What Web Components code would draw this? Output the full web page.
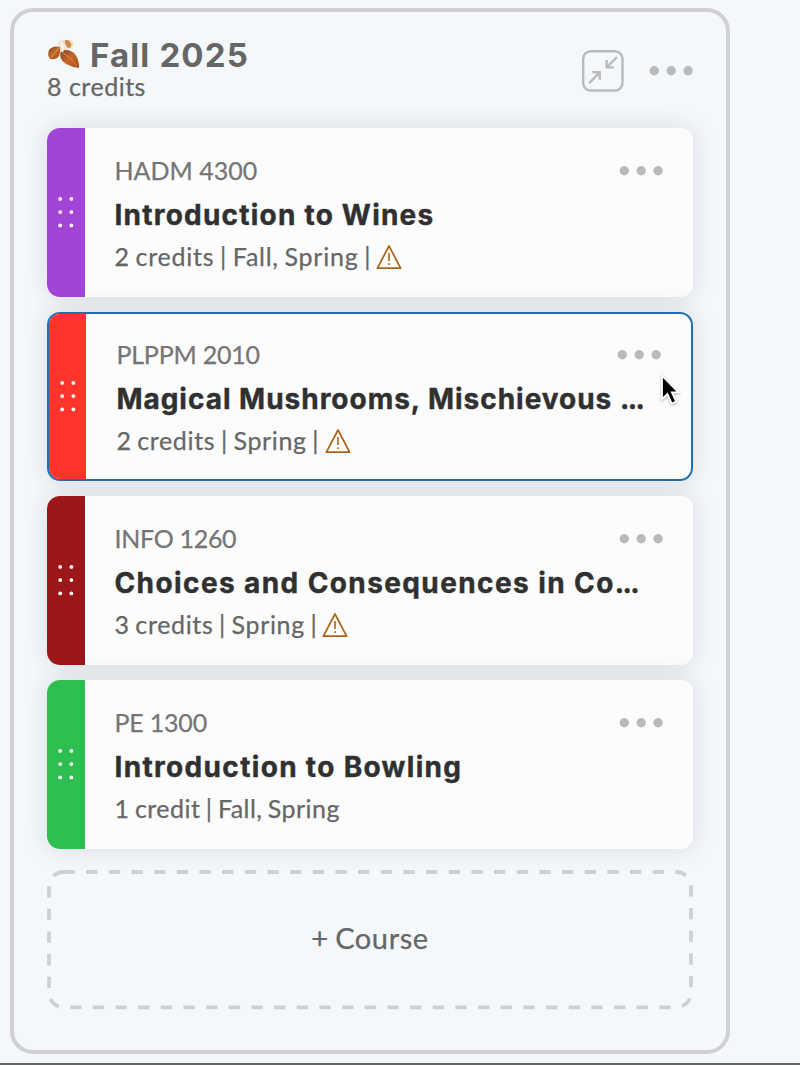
<!DOCTYPE html>
<html lang="en"><head><meta charset="utf-8"><title>Semester planner</title>
<style>
html,body{margin:0;height:100%;overflow:hidden;background:#f4f8fb}
body{font-family:Lato,"Open Sans",sans-serif;font-variant-ligatures:none}
</style></head><body>
<planner-page></planner-page>
<script>
const make=(name,html)=>customElements.define(name,class extends HTMLElement{
 constructor(){super();const t=document.createElement('template');t.innerHTML=html;
 this.attachShadow({mode:'open'}).append(t.content.cloneNode(true));}
});
make('more-dots',`<style>:host{display:block;width:44px;height:10px}svg{display:block}</style>
<svg width="44" height="10" fill="#bababa"><circle cx="5.3" cy="4.7" r="4.7"/><circle cx="22.2" cy="4.7" r="4.7"/><circle cx="39.1" cy="4.7" r="4.7"/></svg>`);
make('warning-icon',`<style>:host{display:inline-block;width:26px;height:26px;vertical-align:top}svg{display:block}</style>
<svg width="26" height="26" fill="none" stroke="#ab6216" stroke-width="1.7" stroke-linejoin="round"><path d="M13 2 24.6 24.2H1.4Z"/><path d="M13 9v8M13 19.2v1.8" stroke-width="1.6"/></svg>`);
make('drag-handle',`<style>:host{display:flex;align-items:center;justify-content:center;width:37.5px;flex:none;background:var(--card-color)}</style>
<svg width="16" height="32" fill="#fff"><circle cx="2.2" cy="2.9" r="1.9"/><circle cx="13.4" cy="2.9" r="1.9"/><circle cx="2.2" cy="16.1" r="1.9"/><circle cx="13.4" cy="16.1" r="1.9"/><circle cx="2.2" cy="29.4" r="1.9"/><circle cx="13.4" cy="29.4" r="1.9"/></svg>`);
make('course-card',`<style>
:host{display:block;height:169px;border-radius:13px;box-shadow:0 0 27px rgba(25,20,45,.12)}
.card{box-sizing:border-box;height:100%;display:flex;border-radius:13px;overflow:hidden;background:#fcfcfc}
:host([selected]) .card{border:2px solid #1f6fb2}
:host([selected]) drag-handle{width:37.4px}
.body{flex:1;min-width:0;padding:0 30.5px 0 30px;margin-top:28px;white-space:nowrap}
:host([selected]) .body{margin-top:26px}
.top{display:flex;justify-content:space-between;align-items:center;height:29px;font-size:25px;color:#757575}
more-dots{margin-top:2px}
.code{letter-spacing:var(--cs,0);-webkit-text-stroke:.25px}
.title{height:36px;line-height:36px;margin-top:12px;font-family:Inter,Lato,sans-serif;font-size:28px;font-weight:700;color:#303030;letter-spacing:var(--ts,0);-webkit-text-stroke:.4px}
.details{display:flex;height:30px;line-height:30px;margin-top:8px;font-size:25px;color:#666;letter-spacing:var(--ds,.75px);word-spacing:-1.4px;-webkit-text-stroke:.25px}
</style><div class="card"><drag-handle></drag-handle><div class="body"><div class="top"><span class="code"><slot name="code"></slot></span><more-dots></more-dots></div><div class="title"><slot></slot></div><div class="details"><slot name="details"></slot></div></div></div>`);
make('collapse-button',`<style>:host{display:block;width:42px;height:42px}svg{display:block}</style>
<svg width="42" height="42" fill="none" stroke="#bababa" stroke-width="2.4"><rect x="1.2" y="1.2" width="39.3" height="39.3" rx="7.5"/><path d="M35 7 24.7 17.3M24.6 10v7.4h7.2M7.2 33.2 17.5 22.7M10.4 22.3h7.4v7.4"/></svg>`);
make('fallen-leaves',`<style>:host{display:block;width:34px;height:32px}svg{display:block}</style>
<svg width="34" height="32" viewBox="0 0 34 32"><defs><linearGradient id="l" x1="0" y1="0" x2="1" y2="1"><stop stop-color="#7e4426"/><stop offset=".5" stop-color="#c5692a"/><stop offset="1" stop-color="#a4480f"/></linearGradient></defs>
<path d="M11 7Q11 2 16 2q8-1 10 3 1 4-3 6-5 3-10 1Z" fill="#f0e3d6"/><path d="M18 2q6 0 8 4-1 4-5 4-4-4-3-8Z" fill="#c98a54"/><path d="M23 3q4 3 1 7" stroke="#f8df9b" stroke-width="2" fill="none"/>
<path d="M13 9Q6 7 2 12q-2 6 1 9 6 1 9-3 2-4 1-9Z" fill="url(#l)"/><path d="M12 10 4 19" stroke="#dc9357" fill="none"/>
<path d="M14 13q8-3 14 3 4 5 4 14-7-1-13-4-8-5-5-13Z" fill="url(#l)"/><path d="M16 15q8 4 14 13" stroke="#df8a43" fill="none"/><path d="M14 5q3 3 1 9" stroke="#fbf4ee" stroke-width="2.4" fill="none"/></svg>`);
make('add-course',`<style>:host{display:block;height:139.3px;position:relative}svg{position:absolute;inset:0}
.label{height:135px;display:flex;align-items:center;justify-content:center;font-size:29px;color:#666;letter-spacing:.6px;word-spacing:-1.5px;-webkit-text-stroke:.25px}</style>
<svg width="646" height="140" fill="none"><rect x="2" y="2" width="642" height="135.3" rx="14.5" stroke="#d0d0d2" stroke-width="3.8" stroke-dasharray="11.33 11.33"/></svg><div class="label"><span><slot></slot></span></div>`);
make('semester-panel',`<style>
:host{display:block;box-sizing:border-box;width:720px;height:1046px;border:4px solid #d0d0d2;border-radius:23px;padding:24px 33px 0}
header{display:flex;height:92px}
.head{flex:1}.name{display:flex;height:40px;line-height:40px;margin-top:-1px;font-family:Inter,Lato,sans-serif;font-size:33px;font-weight:700;color:#666;letter-spacing:1.15px}
fallen-leaves{margin-top:3px;margin-right:9px}
.credits{font-size:25px;line-height:30px;margin-top:-4px;color:#666;letter-spacing:.5px;-webkit-text-stroke:.25px}
.actions{display:flex;align-items:center;gap:25px;height:70px}
.list{display:grid;gap:15px}
add-course{margin-top:21px}
</style><header><div class="head"><div class="name"><fallen-leaves></fallen-leaves><slot name="name"></slot></div><div class="credits"><slot name="credits"></slot></div></div><div class="actions"><collapse-button></collapse-button><more-dots></more-dots></div></header><div class="list"><slot></slot></div><add-course>+ Course</add-course>`);
make('planner-page',`<style>:host{display:block;box-sizing:border-box;height:1065px;padding:7.5px 0 0 10px;border-bottom:2px solid #666}
course-card [slot=details]{display:flex}warning-icon{margin:3px 0 0 5px}
.cut{letter-spacing:-1.6px}[selected] warning-icon{margin-left:6px}</style>
<semester-panel><span slot="name">Fall 2025</span><span slot="credits">8 credits</span>
<course-card style="--card-color:#a244d6;--ts:1.22px"><span slot="code">HADM 4300</span>Introduction to Wines<span slot="details">2 credits | Fall, Spring |<warning-icon></warning-icon></span></course-card>
<course-card selected style="--card-color:#ff342b;--cs:-.2px;--ds:.65px;--ts:.98px"><span slot="code">PLPPM 2010</span>Magical Mushrooms, Mischievous <span class="cut">...</span><span slot="details">2 credits | Spring |<warning-icon></warning-icon></span></course-card>
<course-card style="--card-color:#9c1717;--cs:-.3px;--ds:.65px;--ts:1.4px"><span slot="code">INFO 1260</span>Choices and Consequences in Co<span class="cut">...</span><span slot="details">3 credits | Spring |<warning-icon></warning-icon></span></course-card>
<course-card style="--card-color:#2fbf50;--cs:-.2px;--ds:.45px;--ts:1.33px"><span slot="code">PE 1300</span>Introduction to Bowling<span slot="details">1 credit | Fall, Spring</span></course-card>
</semester-panel>
<mouse-cursor></mouse-cursor>`);
make('mouse-cursor',`<style>:host{position:absolute;left:658px;top:371px;filter:drop-shadow(0 1px 1px #0005)}svg{display:block}</style>
<svg width="24" height="38"><path d="M4 4.5v23.7l5.4-5.2 4.3 9.6 4.5-2.1-4.3-9.2h6.6Z" fill="#000" stroke="#fff" stroke-width="1.8"/></svg>`);
</script></body></html>
